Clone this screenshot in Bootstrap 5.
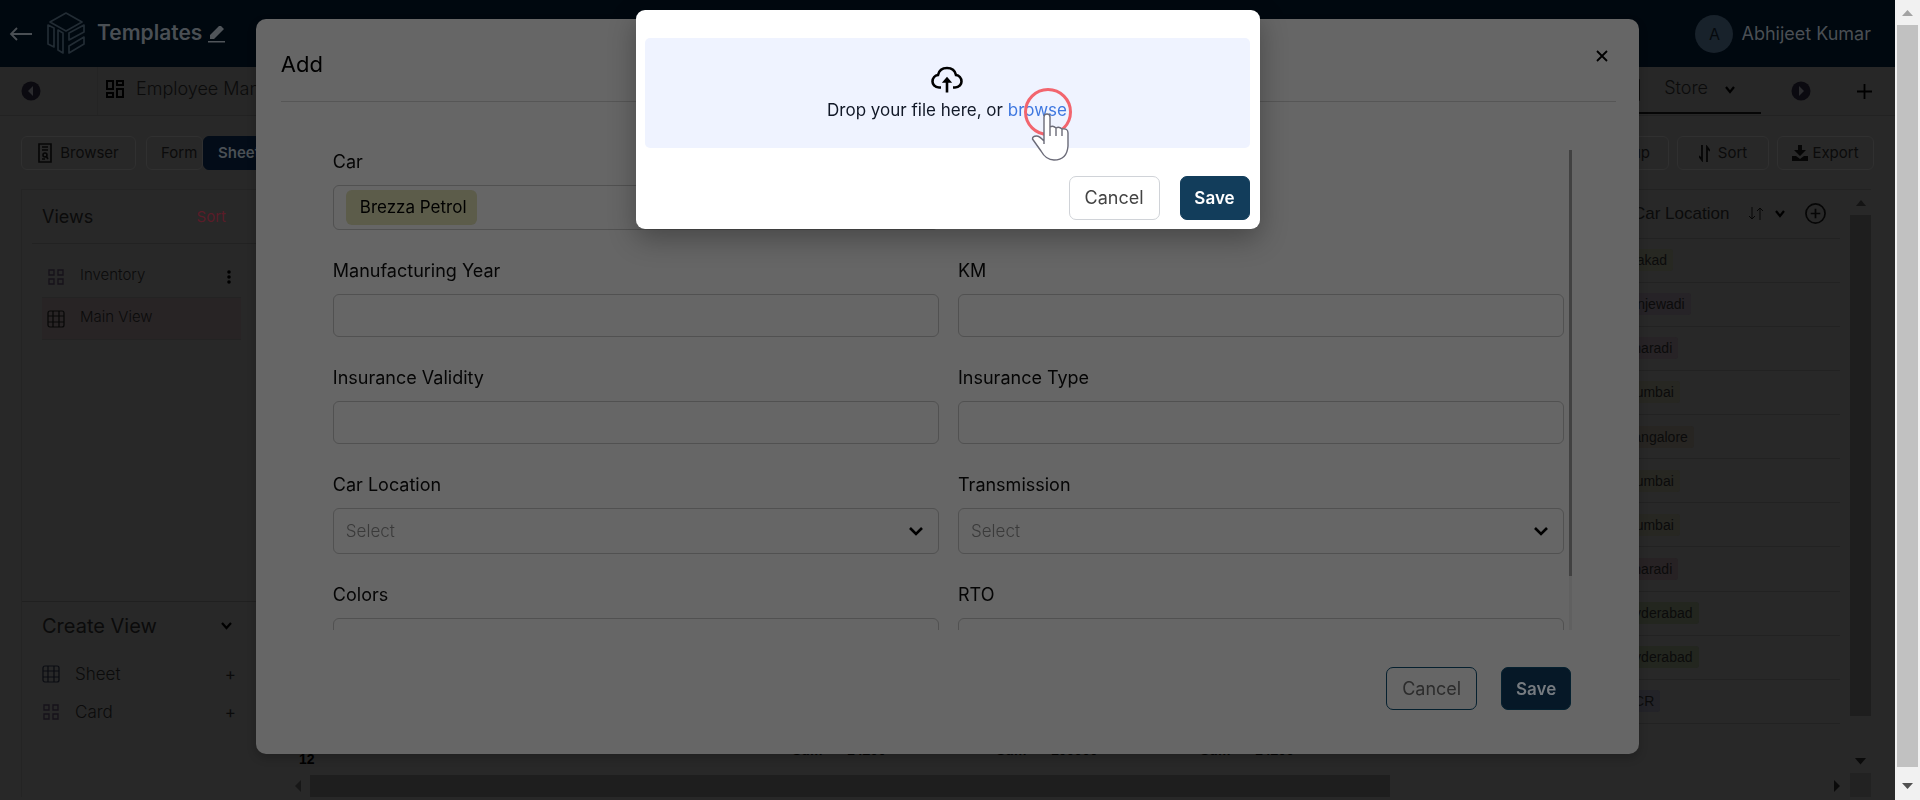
<!DOCTYPE html>
<html lang="en">
<head>
<meta charset="utf-8">
<meta name="viewport" content="width=device-width, initial-scale=1">
<title>Templates</title>
<link rel="stylesheet" href="https://cdn.jsdelivr.net/npm/bootstrap@5.3.0/dist/css/bootstrap.min.css">
<style>
:root{--bar:25px;--ink:#0b0b0b}
html,body{height:100%}
body{font-family:Inter,"Open Sans",sans-serif;font-size:16px;line-height:24px;color:var(--ink);background:#282828;overflow:hidden}
button,input,select{font-family:inherit}
svg{display:block;flex:none}
.app-shell{height:100vh;min-width:0}
.top-bar{height:67px;background:#00080f;color:#4a4f54;padding:0 24px 0 9px}
.top-bar h1{font-size:21px;font-weight:600;line-height:26px;padding-bottom:2px}
.user-name{font-size:18px}
.logo{margin:0 12px 0 14px}
.avatar{width:38px;height:38px;border-radius:50%;background:#18222b;color:#05090d}
.plain{border:0;background:none;padding:0;color:inherit;display:flex;align-items:center}
.tab-strip{height:49px;border-bottom:1px solid #222;background:#272727;font-size:18px;font-weight:300}
.tab-strip a{padding-bottom:4px}
.tab-lead{width:98px;padding-left:21px;border-right:1px solid #242424}
.tab-on{border-bottom:2px solid #060606;padding-right:26px;height:46px}
.tool{height:34px;border:1px solid #303030;border-radius:6px;font-size:15px;color:#0b0b0b;background:none}
.tool-bar{padding:20px 21px 19px}
.tool-on{background:#030c18;color:#4a5055;border-color:#030c18;font-weight:600}
.work{padding:0 24px 3px 21px;min-height:0}
.side{width:240px;border-left:1px solid #242424;border-top:1px solid #242424}
.side-head{height:54px;border-bottom:1px solid #222;margin-left:10px;padding:0 35px 0 10px;font-size:18px}
.side-head a{color:#5a1c28;font-size:15px}
.side-item{height:42px;border-bottom:1px solid #232323;margin:0 20px 0 20px;padding:0 10px 0 5px;font-weight:300;font-size:15px}
.side-item span{padding-bottom:3px}
.side-first{margin-top:12px}
.picked{background:#282425}
.make{border-top:1px solid #202020;height:196px;padding:8px 25px 0 20px}
.make h2{font-size:20px;line-height:32px;font-weight:400}
.make .opt{height:38px;font-size:17px;font-weight:300}
.make .opt-first{margin-top:13px}
.grid-area{font-family:"Liberation Sans",Arial,sans-serif;font-size:14px;border-top:1px solid #222}
.grid-table{height:534px;border-collapse:collapse}
.grid-table td,.grid-table th{border-bottom:1px solid #222;padding:0}
.grid-table th{font-size:17px;font-weight:400;height:48px}
.grid-view{padding-right:10px;min-height:0}
.loc-col{width:222px}
.loc-head{padding-left:15px}
.chip{padding:3px 6px;border-radius:3px}
.totals{height:38px;font-weight:700;line-height:16px;padding:5px 0 0 14px;color:#000}
.bar-h{height:22px}
.bar-v{width:21px;padding:10px 0 0}
.bar-v .thumb{height:84%;margin-top:9px}
.bar-h .thumb{width:69%;margin-left:5px}
.corner{height:24px;background:#222}
.thumb{background:#1e1e1e}
.page-bar{width:var(--bar);background:#f1f1f1;padding:10px 0 11px}
.page-bar .thumb{background:#c1c1c1;margin:9px 2px 16px}
/* dialogs are centred over the app, beside the page scrollbar */
.layer{position:fixed;inset:0 var(--bar) 0 0}
.add-box{width:73%;margin:19px auto 0;padding-bottom:44px;background:#666;border-radius:10px;box-shadow:0 4px 10px rgba(0,0,0,.2);color:#000}
.add-head{height:83px;margin:0 23px 0 25px;padding-top:31px;border-bottom:1px solid #565656}
.add-head h2{font-size:22px;line-height:28px;font-weight:400}
.add-foot{margin:37px 68px 0 0}
.form-scroll{height:480px;margin:48px 67px 0 77px;overflow:hidden}
.fields{display:grid;grid-template-columns:1fr 1fr;column-gap:19px;row-gap:29px;align-content:start}
.fields label,.label-text{font-size:18px;line-height:24px;margin-bottom:11px;display:block;color:#050505}
.box{width:100%;height:43px;border:1px solid #515151;border-radius:6px;background:transparent;color:#3a3a3a;padding:0 12px;font-size:17px;font-weight:300;display:block}
.box-tag{height:45px}
.box-pick{height:46px;appearance:none;background:no-repeat right 14px center/16px 10px url("data:image/svg+xml,%3Csvg xmlns='http://www.w3.org/2000/svg' viewBox='0 0 16 10'%3E%3Cpath d='M2 2l6 6 6-6' fill='none' stroke='%23000' stroke-width='2.6'/%3E%3C/svg%3E")}
.tag{background:#5c5c4a;border-radius:6px;height:35px;padding:0 10px 2px 14px;font-size:17px;font-weight:400;color:#000}
.form-track{width:3px;background:#606060}
.form-track .thumb{height:426px;background:#414141}
.act{height:44px;border-radius:7px;font-size:18px;padding:0;width:91px;border:1px solid #d0d3d8;background:#fff;color:#444}
.act-go{width:70px;font-size:17px;background:#123d5b;border-color:#123d5b;color:#fff;font-weight:600}
.dim .act{border-color:#05202f;background:transparent;color:#2c2c2c;height:43px}
.dim .act-go{background:#061827;color:#767b80}
.up-box{width:624px;height:219px;margin:10px auto 0;background:#fff;border-radius:9px;padding:28px 10px 9px 9px;box-shadow:0 10px 28px rgba(0,0,0,.3)}
.drop{height:110px;background:#eff3ff;border-radius:5px;color:#111827;font-size:17px;padding-top:28px}
.drop a{color:#3f78e0;text-decoration:none;position:relative}
.hit{position:absolute;right:-6px;top:-13px}
</style>
</head>
<body class="d-flex">
<div class="app-shell d-flex flex-column flex-grow-1">
  <header class="top-bar d-flex align-items-center">
    <button class="plain" aria-label="Back"><svg width="24" height="16" viewBox="0 0 24 16" fill="none" stroke="#4a4f54" stroke-width="1.800"><path d="M23 8H2M8 2L2 8l6 6"/></svg></button>
    <svg class="logo" width="38" height="44" viewBox="0 0 38 44" fill="none" stroke="#222c34" stroke-width="1.700" stroke-linejoin="round"><path d="M19 1L35 10 19 19 3 10zM1 13l6 3v19L1 32zM11 18l5 3v20l-5-3zM37 13L22 21v7l15-8zM22 34v7l15-9v-7z"/></svg>
    <h1 class="mb-0">Templates</h1>
    <button class="plain" style="margin-left:6px" aria-label="Rename"><svg width="17" height="18" viewBox="0 0 17 18" fill="#50555a"><path d="M2 14v-4l9-9h2l3 3-10 10zM0 16h17v1.500H0z"/></svg></button>
    <span class="avatar d-flex align-items-center justify-content-center ms-auto">A</span>
    <span class="user-name ms-2">Abhijeet Kumar</span>
  </header>

  <nav class="tab-strip d-flex align-items-center">
    <div class="tab-lead h-100 d-flex align-items-center"><button class="plain" aria-label="Earlier tabs"><svg width="20" height="20" viewBox="0 0 20 20"><circle cx="10" cy="10" r="9.500" fill="#0b0a10"/><path d="M12 5v10l-5-5z" fill="#2b2b2e"/></svg></button></div>
    <svg class="ms-2 mb-1" width="18" height="18" viewBox="0 0 18 18" fill="none" stroke="#000" stroke-width="2"><path d="M1 1h6v8H1zM11 1h6v4h-6zM1 13h6v4H1zM11 9h6v8h-6z"/></svg>
    <a class="text-reset text-decoration-none ms-2 ps-1" href="#">Employee Management</a>
    <div class="tab-on d-flex align-items-center ms-auto">
      <svg width="22" height="22" viewBox="0 0 22 22" fill="none" stroke="#000" stroke-width="1.400"><path d="M1 1h20v20H1zM1 6h20M1 11h20M1 16h20M8 1v20M14 1v20"/></svg>
      <a class="text-reset text-decoration-none" style="margin:0 17px 0 24px" href="#">Store</a>
      <svg width="10" height="8" viewBox="0 0 10 8" fill="none" stroke="#000" stroke-width="2.200"><path d="M1 1l4 5 4-5"/></svg>
    </div>
    <button class="plain" style="margin:0 46px 0 30px" aria-label="Later tabs"><svg width="20" height="20" viewBox="0 0 20 20"><circle cx="10" cy="10" r="9.500" fill="#0b0a10"/><path d="M8 5v10l5-5z" fill="#2b2b2e"/></svg></button>
    <button class="plain" style="margin-right:23px" aria-label="New tab"><svg width="15" height="15" viewBox="0 0 15 15" stroke="#000" stroke-width="1.800"><path d="M7.500 0v15M0 7.500h15"/></svg></button>
  </nav>

  <div class="tool-bar d-flex align-items-center">
    <button class="tool d-flex align-items-center justify-content-center gap-2" style="width:115px"><svg width="14" height="20" viewBox="0 0 14 20" fill="none" stroke="#060606" stroke-width="1.600"><path d="M1 1h12v18H1zM4 4h6M4 7h6"/><circle cx="7" cy="12" r="2"/><path d="M8 13l2 3M4 16h3"/></svg>Browser</button>
    <button class="tool text-start" style="width:57px;margin-left:10px;padding-left:14px">Form</button>
    <button class="tool tool-on text-start" style="width:80px;padding-left:14px">Sheet</button>
    <button class="tool ms-auto me-2 text-end" style="width:110px;padding-right:18px">Group</button>
    <button class="tool me-2 d-flex align-items-center justify-content-center gap-2" style="width:92px"><svg width="11" height="17" viewBox="0 0 11 17" fill="none" stroke="#060606" stroke-width="1.800"><path d="M3 0v15L0 11M8 17V2l3 4"/></svg>Sort</button>
    <button class="tool d-flex align-items-center justify-content-center gap-1" style="width:97px"><svg width="16" height="16" viewBox="0 0 16 16" fill="#060606"><path d="M6 0h4v5h4l-6 6-6-6h4zM0 11h4l4 3 4-3h4v5H0z"/></svg>Export</button>
  </div>

  <main class="work d-flex flex-grow-1">
    <aside class="side d-flex flex-column">
      <div class="side-head d-flex align-items-center justify-content-between">Views<a href="#" class="text-decoration-none">Sort</a></div>
      <div class="side-item side-first d-flex align-items-center"><svg width="18" height="16" viewBox="0 0 16 16" fill="none" stroke="#16121a" stroke-width="1.300"><path d="M1 1h5v5H1zM10 1h5v5h-5zM1 10h5v5H1zM10 10h5v5h-5z"/></svg><span style="margin-left:15px">Inventory</span><button class="plain ms-auto" aria-label="More"><svg width="4" height="14" viewBox="0 0 4 14"><circle cx="2" cy="2" r="1.800"/><circle cx="2" cy="7" r="1.800"/><circle cx="2" cy="12" r="1.800"/></svg></button></div>
      <div class="side-item d-flex align-items-center picked"><svg width="18" height="18" viewBox="0 0 18 18" fill="none" stroke="#080808" stroke-width="1.200"><rect x="1" y="1" width="16" height="16" rx="2"/><path d="M1 6h16M1 12h16M6 1v16M12 1v16"/></svg><span style="margin-left:15px">Main View</span></div>
      <div class="make mt-auto">
        <div class="d-flex align-items-center justify-content-between"><h2 class="mb-0">Create View</h2><svg class="me-1" width="11" height="8" viewBox="0 0 11 8" fill="none" stroke="#000" stroke-width="2.200"><path d="M1 1l4.500 5L10 1"/></svg></div>
        <div class="opt opt-first d-flex align-items-center"><svg width="18" height="18" viewBox="0 0 18 18" fill="none" stroke="#0a0c12" stroke-width="1.200"><rect x="1" y="1" width="16" height="16" rx="2"/><path d="M1 6h16M1 12h16M6 1v16M12 1v16"/></svg><span style="margin-left:15px">Sheet</span><button class="plain ms-auto" aria-label="Add sheet view">+</button></div>
        <div class="opt d-flex align-items-center"><svg width="18" height="16" viewBox="0 0 16 16" fill="none" stroke="#16121a" stroke-width="1.300"><path d="M1 1h5v5H1zM10 1h5v5h-5zM1 10h5v5H1zM10 10h5v5h-5z"/></svg><span style="margin-left:15px">Card</span><button class="plain ms-auto" aria-label="Add card view">+</button></div>
      </div>
    </aside>
    <section class="grid-area d-flex flex-grow-1 ms-4" style="min-width:0">
      <div class="flex-grow-1 d-flex flex-column" style="min-width:0">
        <div class="grid-view flex-grow-1 overflow-hidden">
          <table class="grid-table w-100">
            <thead><tr><th></th><th class="loc-col"><div class="loc-head d-flex align-items-center"><span>Car Location</span><svg style="margin-left:20px" width="14" height="13" viewBox="0 0 14 13" fill="none" stroke="#060606"><path d="M3 0v12L0 9M3 12l3-3M11 13V1L8 4M11 1l3 3"/></svg><svg style="margin-left:12px" width="10" height="8" viewBox="0 0 10 8" fill="none" stroke="#000" stroke-width="2.200"><path d="M1 1l4 5 4-5"/></svg><button class="plain" style="margin-left:20px" aria-label="Add column"><svg width="21" height="21" viewBox="0 0 22 22" fill="none" stroke="#060606" stroke-width="1.800"><circle cx="11" cy="11" r="10"/><path d="M11 6v10M6 11h10"/></svg></button></div></th></tr></thead>
            <tbody>
              <tr><td></td><td><span class="chip" style="background:#272822">Wakad</span></td></tr>
              <tr><td></td><td><span class="chip" style="background:#262327">Hinjewadi</span></td></tr>
              <tr><td></td><td><span class="chip" style="background:#272326">Kharadi</span></td></tr>
              <tr><td></td><td><span class="chip" style="background:#272722">Mumbai</span></td></tr>
              <tr><td></td><td><span class="chip" style="background:#272522">Bangalore</span></td></tr>
              <tr><td></td><td><span class="chip" style="background:#272722">Mumbai</span></td></tr>
              <tr><td></td><td><span class="chip" style="background:#272722">Mumbai</span></td></tr>
              <tr><td></td><td><span class="chip" style="background:#272224">Kharadi</span></td></tr>
              <tr><td></td><td><span class="chip" style="background:#23261f">Hyderabad</span></td></tr>
              <tr><td></td><td><span class="chip" style="background:#23261f">Hyderabad</span></td></tr>
              <tr><td></td><td><span class="chip" style="background:#232328">NCR</span></td></tr>
            </tbody>
          </table>
        </div>
        <div class="totals d-flex"><span class="align-self-center" style="width:493px">12</span><span style="width:55px">Sum</span><span style="width:149px">14200</span><span style="width:55px">Sum</span><span style="width:149px">100000</span><span style="width:55px">Sum</span><span>14200</span></div>
        <div class="bar-h d-flex align-items-center">
          <svg class="ms-2" width="12" height="12" viewBox="0 0 12 12"><path d="M8 0v12L2 6z" fill="#171717"/></svg>
          <div class="thumb h-100"></div>
          <svg class="ms-auto" style="margin-right:10px" width="6" height="12" viewBox="0 0 6 12"><path d="M0 0v12l6-6z" fill="#0a0a0a"/></svg>
        </div>
      </div>
      <div class="bar-v d-flex flex-column align-items-center">
        <svg width="10" height="6" viewBox="0 0 10 6"><path d="M0 6h10L5 0z" fill="#141414"/></svg>
        <div class="thumb w-100"></div>
        <svg class="mt-auto mb-2" width="11" height="7" viewBox="0 0 11 7"><path d="M0 0h11L5.500 6.500z" fill="#0a0a0a"/></svg>
        <div class="corner w-100"></div>
      </div>
    </section>
  </main>
</div>

<div class="page-bar d-flex flex-column align-items-center">
  <svg width="11" height="6" viewBox="0 0 11 6"><path d="M0 6h11L5.500 0z" fill="#a3a3a3"/></svg>
  <div class="thumb align-self-stretch flex-grow-1"></div>
  <svg width="11" height="6" viewBox="0 0 11 6"><path d="M0 0h11L5.500 6z" fill="#505050"/></svg>
</div>

<div class="layer">
  <section class="add-box dim d-flex flex-column" role="dialog" aria-label="Add">
    <div class="add-head d-flex justify-content-between"><h2 class="mb-0">Add</h2><button class="plain align-self-start me-2" aria-label="Close"><svg width="12" height="12" viewBox="0 0 12 12" stroke="#000" stroke-width="1.800"><path d="M1 1l10 10M11 1L1 11"/></svg></button></div>
    <div class="form-scroll d-flex">
      <form class="fields flex-grow-1" style="margin-right:5px">
        <div><span class="label-text" id="car-label">Car</span><div class="box box-tag d-flex align-items-center" role="group" aria-labelledby="car-label"><span class="tag d-flex align-items-center">Brezza Petrol</span></div></div><div></div>
        <div><label for="year">Manufacturing Year</label><input class="box" id="year"></div>
        <div><label for="km">KM</label><input class="box" id="km"></div>
        <div><label for="val">Insurance Validity</label><input class="box" id="val"></div>
        <div><label for="type">Insurance Type</label><input class="box" id="type"></div>
        <div><label for="loc">Car Location</label><select class="box box-pick" id="loc"><option>Select</option></select></div>
        <div><label for="trans">Transmission</label><select class="box box-pick" id="trans"><option>Select</option></select></div>
        <div><label for="colors">Colors</label><input class="box" id="colors"></div>
        <div><label for="rto">RTO</label><input class="box" id="rto"></div>
      </form>
      <div class="form-track"><div class="thumb"></div></div>
    </div>
    <div class="add-foot d-flex justify-content-end gap-4"><button class="act">Cancel</button><button class="act act-go">Save</button></div>
  </section>
</div>

<div class="layer">
  <section class="up-box d-flex flex-column justify-content-between" role="dialog" aria-label="Upload file">
    <div class="drop d-flex flex-column align-items-center">
      <svg width="32" height="28" viewBox="0 0 32 28" fill="none" stroke="#000" stroke-width="2.600"><path d="M10 21.500H8C3.500 21.500 1.500 18 1.500 15.500c0-3.500 2.500-6 5.500-6.500C8 4.500 11 2 16 2s8 2.500 9 7c3 .5 5.500 3 5.500 6.500 0 2.500-2 6-6.500 6h-2M16 26.500V14"/><path d="M12.500 16L16 12l3.500 4z" fill="#000" stroke-width="1.500"/></svg>
      <div class="pt-1">Drop your file here, or <a href="#">browse<svg class="hit" width="50" height="76" viewBox="0 0 50 76" fill="none"><circle cx="25" cy="25" r="22.500" stroke="#f2656e" stroke-width="3"/><path d="M21 57V30q0-3 3-3t3 3v10q3-2 6 1 3-2 6 1 6-1 6 4v13q-1 14-14 14-8 0-13-9L9.500 52q0-3 4-3 3 0 7.500 5M27 40v9M33 41v8M39 42v7" fill="#fff" stroke="#6b6b78" stroke-width="1.400" stroke-linejoin="round"/></svg></a></div>
    </div>
    <div class="d-flex justify-content-end" style="gap:20px"><button class="act">Cancel</button><button class="act act-go">Save</button></div>
  </section>
</div>
<script src="https://cdn.jsdelivr.net/npm/bootstrap@5.3.0/dist/js/bootstrap.bundle.min.js"></script>
</body>
</html>
